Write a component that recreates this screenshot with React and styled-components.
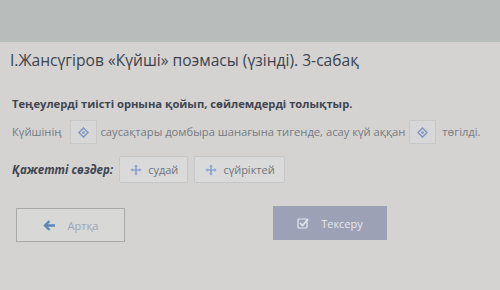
import styled, { createGlobalStyle } from "styled-components";

const GlobalStyle = createGlobalStyle`
  html, body {
    margin: 0;
    padding: 0;
    width: 500px;
    height: 290px;
    overflow: hidden;
    background: #d4d3d1;
    font-family: "Open Sans", "Liberation Sans", sans-serif;
  }
`;

export default function App() {
  return (
    <>
      <GlobalStyle />
      <Page>
        <TopBand />
        <Content>
          <Title>І.Жансүгіров «Күйші» поэмасы (үзінді). 3-сабақ</Title>
          <Instruction>Теңеулерді тиісті орнына қойып, сөйлемдерді толықтыр.</Instruction>
          <Sentence>
            <span>Күйшінің</span>
            <DropBox $left={8}><DropIcon /></DropBox>
            <span>саусақтары домбыра шанағына тигенде, асау күй аққан</span>
            <DropBox $left={4} $right={6}><DropIcon /></DropBox>
            <span>төгілді.</span>
          </Sentence>
          <WordsRow>
            <WordsLabel>Қажетті сөздер:</WordsLabel>
            <Chip><MoveIcon />судай</Chip>
            <Chip><MoveIcon />сүйріктей</Chip>
          </WordsRow>
          <Actions>
            <BackButton>
              <ArrowIcon />
              Артқа
            </BackButton>
            <CheckButton>
              <CheckIcon />
              Тексеру
            </CheckButton>
          </Actions>
        </Content>
      </Page>
    </>
  );
}

function DropIcon() {
  return (
    <svg width="11" height="11" viewBox="0 0 12 12">
      <path d="M6 1 L11 6 L6 11 L1 6 Z" fill="none" stroke="#7f95c4" strokeWidth="1.6" />
      <circle cx="6" cy="6" r="1.5" fill="#7f95c4" />
    </svg>
  );
}

function MoveIcon() {
  return (
    <svg width="12" height="12" viewBox="0 0 12 12">
      <path d="M6 0.5 L8 2.5 H6.8 V5.2 H9.5 V4 L11.5 6 L9.5 8 V6.8 H6.8 V9.5 H8 L6 11.5 L4 9.5 H5.2 V6.8 H2.5 V8 L0.5 6 L2.5 4 V5.2 H5.2 V2.5 H4 Z" fill="#8aa1d0" />
    </svg>
  );
}

function ArrowIcon() {
  return (
    <svg width="13" height="11" viewBox="0 0 13 11">
      <path d="M12 5.5 H3 M6.5 1 L2 5.5 L6.5 10" fill="none" stroke="#5f86b8" strokeWidth="2.4" />
    </svg>
  );
}

function CheckIcon() {
  return (
    <svg width="12" height="12" viewBox="0 0 12 12">
      <rect x="1" y="2" width="9" height="9" rx="1" fill="none" stroke="#e4e6ee" strokeWidth="1.2" />
      <path d="M3 6 L5.5 8.5 L11 2" fill="none" stroke="#e4e6ee" strokeWidth="1.6" />
    </svg>
  );
}

const Page = styled.div`
  width: 500px;
  height: 290px;
  display: flex;
  flex-direction: column;
`;

const TopBand = styled.div`
  height: 42px;
  background: #b8bcbb;
  flex-shrink: 0;
`;

const Content = styled.div`
  display: flex;
  flex-direction: column;
  padding: 0 12px 0 10px;
`;

const Title = styled.h1`
  margin: 6px 0 0;
  font-size: 15.6px;
  font-weight: 400;
  color: #3d434d;
  line-height: 24px;
`;

const Instruction = styled.div`
  margin: 24px 0 0 2px;
  font-size: 11.2px;
  font-weight: 700;
  color: #3f4550;
  line-height: 16px;
`;

const Sentence = styled.div`
  margin: 8px 0 0 2px;
  display: flex;
  align-items: center;
  font-size: 11.2px;
  color: #757a82;
  line-height: 16px;
`;

const DropBox = styled.div`
  width: 27px;
  height: 24px;
  margin: 0 ${(p) => p.$right ?? 4}px 0 ${(p) => p.$left ?? 4}px;
  display: flex;
  align-items: center;
  justify-content: center;
  border: 1px solid #c8c8c8;
  background: #d7d7d7;
  box-sizing: border-box;
`;

const WordsRow = styled.div`
  margin: 12px 0 0 2px;
  display: flex;
  align-items: center;
  gap: 6px;
`;

const WordsLabel = styled.span`
  font-size: 11.5px;
  font-weight: 700;
  font-style: italic;
  color: #3f4550;
`;

const Chip = styled.div`
  height: 27px;
  display: flex;
  align-items: center;
  gap: 6px;
  padding: 0 9px 0 10px;
  box-sizing: border-box;
  border: 1px solid #c6c6c6;
  border-radius: 2px;
  background: #dadada;
  font-size: 11px;
  color: #6f747c;
`;

const Actions = styled.div`
  margin: 23px 0 0 6px;
  display: flex;
  align-items: flex-start;
  gap: 148px;
`;

const BaseButton = styled.div`
  height: 34px;
  display: flex;
  align-items: center;
  justify-content: center;
  gap: 12px;
  box-sizing: border-box;
  font-size: 11px;
`;

const BackButton = styled(BaseButton)`
  width: 109px;
  border: 1px solid #a9a9a9;
  background: #d8d8d6;
  color: #9aa6b6;
  margin-top: 2px;
`;

const CheckButton = styled(BaseButton)`
  width: 114px;
  background: #9ca1b6;
  color: #e6e7ee;
`;
